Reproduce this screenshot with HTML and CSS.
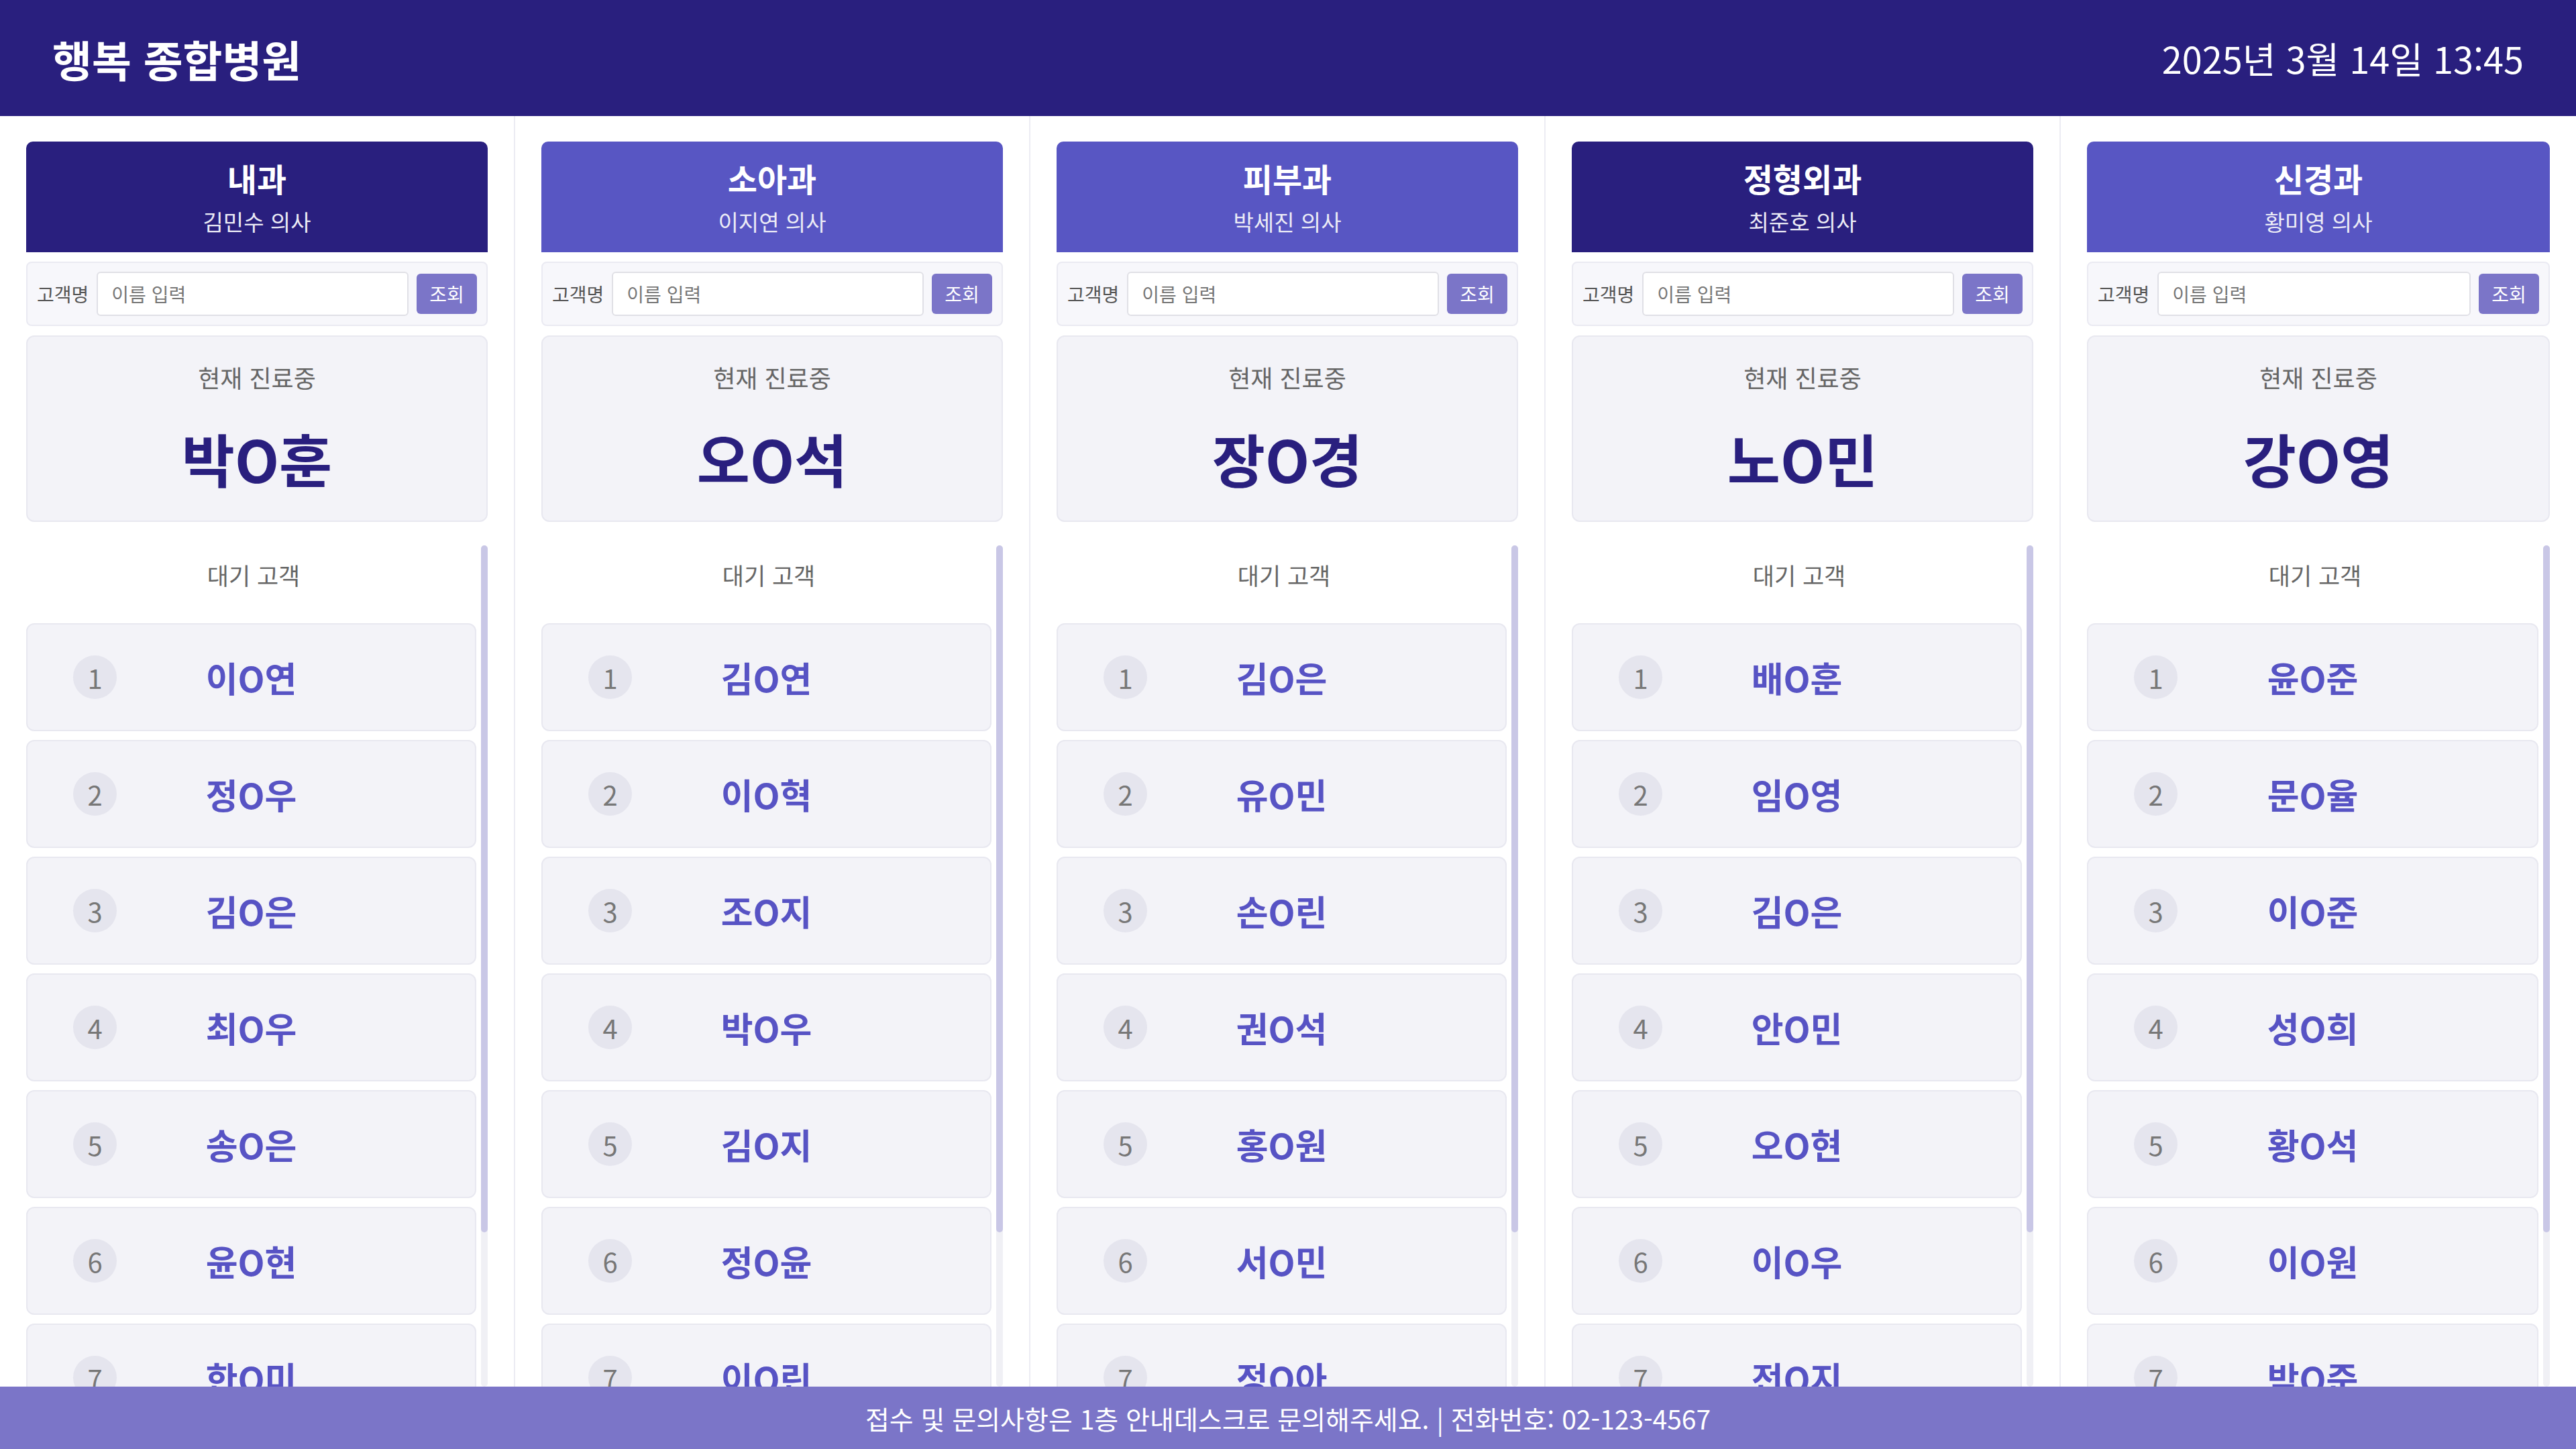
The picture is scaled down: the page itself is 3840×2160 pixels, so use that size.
FILE: index.html
```html
<!DOCTYPE html>
<html lang="ko">
<head>
    <meta charset="UTF-8">
    <meta name="viewport" content="width=device-width, initial-scale=1.0">
    <title>행복 종합병원 진료 현황</title>
    <link rel="stylesheet" href="styles.css">
</head>
<body>
    <header class="topbar">
        <h1 class="hospital">행복 종합병원</h1>
        <div class="clock">2025년 3월 14일 13:45</div>
    </header>

    <main class="board">
        <!-- 내과 -->
        <section class="dept">
            <div class="dept-head dark">
                <h2>내과</h2>
                <p>김민수 의사</p>
            </div>
            <div class="search">
                <label>고객명</label>
                <input type="text" placeholder="이름 입력">
                <button>조회</button>
            </div>
            <div class="now">
                <div class="now-label">현재 진료중</div>
                <div class="now-name">박O훈</div>
            </div>
            <div class="waiting-wrap">
                <div class="waiting">
                    <div class="waiting-title">대기 고객</div>
                    <div class="queue-item"><span class="num">1</span><span class="name">이O연</span></div>
                    <div class="queue-item"><span class="num">2</span><span class="name">정O우</span></div>
                    <div class="queue-item"><span class="num">3</span><span class="name">김O은</span></div>
                    <div class="queue-item"><span class="num">4</span><span class="name">최O우</span></div>
                    <div class="queue-item"><span class="num">5</span><span class="name">송O은</span></div>
                    <div class="queue-item"><span class="num">6</span><span class="name">윤O현</span></div>
                    <div class="queue-item"><span class="num">7</span><span class="name">한O미</span></div>
                    <div class="queue-item"><span class="num">8</span><span class="name">강O수</span></div>
                </div>
                <div class="scroll-track"><div class="scroll-thumb"></div></div>
            </div>
        </section>

        <!-- 소아과 -->
        <section class="dept">
            <div class="dept-head">
                <h2>소아과</h2>
                <p>이지연 의사</p>
            </div>
            <div class="search">
                <label>고객명</label>
                <input type="text" placeholder="이름 입력">
                <button>조회</button>
            </div>
            <div class="now">
                <div class="now-label">현재 진료중</div>
                <div class="now-name">오O석</div>
            </div>
            <div class="waiting-wrap">
                <div class="waiting">
                    <div class="waiting-title">대기 고객</div>
                    <div class="queue-item"><span class="num">1</span><span class="name">김O연</span></div>
                    <div class="queue-item"><span class="num">2</span><span class="name">이O혁</span></div>
                    <div class="queue-item"><span class="num">3</span><span class="name">조O지</span></div>
                    <div class="queue-item"><span class="num">4</span><span class="name">박O우</span></div>
                    <div class="queue-item"><span class="num">5</span><span class="name">김O지</span></div>
                    <div class="queue-item"><span class="num">6</span><span class="name">정O윤</span></div>
                    <div class="queue-item"><span class="num">7</span><span class="name">이O린</span></div>
                    <div class="queue-item"><span class="num">8</span><span class="name">최O민</span></div>
                </div>
                <div class="scroll-track"><div class="scroll-thumb"></div></div>
            </div>
        </section>

        <!-- 피부과 -->
        <section class="dept">
            <div class="dept-head">
                <h2>피부과</h2>
                <p>박세진 의사</p>
            </div>
            <div class="search">
                <label>고객명</label>
                <input type="text" placeholder="이름 입력">
                <button>조회</button>
            </div>
            <div class="now">
                <div class="now-label">현재 진료중</div>
                <div class="now-name">장O경</div>
            </div>
            <div class="waiting-wrap">
                <div class="waiting">
                    <div class="waiting-title">대기 고객</div>
                    <div class="queue-item"><span class="num">1</span><span class="name">김O은</span></div>
                    <div class="queue-item"><span class="num">2</span><span class="name">유O민</span></div>
                    <div class="queue-item"><span class="num">3</span><span class="name">손O린</span></div>
                    <div class="queue-item"><span class="num">4</span><span class="name">권O석</span></div>
                    <div class="queue-item"><span class="num">5</span><span class="name">홍O원</span></div>
                    <div class="queue-item"><span class="num">6</span><span class="name">서O민</span></div>
                    <div class="queue-item"><span class="num">7</span><span class="name">정O아</span></div>
                    <div class="queue-item"><span class="num">8</span><span class="name">한O준</span></div>
                </div>
                <div class="scroll-track"><div class="scroll-thumb"></div></div>
            </div>
        </section>

        <!-- 정형외과 -->
        <section class="dept">
            <div class="dept-head dark">
                <h2>정형외과</h2>
                <p>최준호 의사</p>
            </div>
            <div class="search">
                <label>고객명</label>
                <input type="text" placeholder="이름 입력">
                <button>조회</button>
            </div>
            <div class="now">
                <div class="now-label">현재 진료중</div>
                <div class="now-name">노O민</div>
            </div>
            <div class="waiting-wrap">
                <div class="waiting">
                    <div class="waiting-title">대기 고객</div>
                    <div class="queue-item"><span class="num">1</span><span class="name">배O훈</span></div>
                    <div class="queue-item"><span class="num">2</span><span class="name">임O영</span></div>
                    <div class="queue-item"><span class="num">3</span><span class="name">김O은</span></div>
                    <div class="queue-item"><span class="num">4</span><span class="name">안O민</span></div>
                    <div class="queue-item"><span class="num">5</span><span class="name">오O현</span></div>
                    <div class="queue-item"><span class="num">6</span><span class="name">이O우</span></div>
                    <div class="queue-item"><span class="num">7</span><span class="name">전O지</span></div>
                    <div class="queue-item"><span class="num">8</span><span class="name">송O아</span></div>
                </div>
                <div class="scroll-track"><div class="scroll-thumb"></div></div>
            </div>
        </section>

        <!-- 신경과 -->
        <section class="dept">
            <div class="dept-head">
                <h2>신경과</h2>
                <p>황미영 의사</p>
            </div>
            <div class="search">
                <label>고객명</label>
                <input type="text" placeholder="이름 입력">
                <button>조회</button>
            </div>
            <div class="now">
                <div class="now-label">현재 진료중</div>
                <div class="now-name">강O영</div>
            </div>
            <div class="waiting-wrap">
                <div class="waiting">
                    <div class="waiting-title">대기 고객</div>
                    <div class="queue-item"><span class="num">1</span><span class="name">윤O준</span></div>
                    <div class="queue-item"><span class="num">2</span><span class="name">문O율</span></div>
                    <div class="queue-item"><span class="num">3</span><span class="name">이O준</span></div>
                    <div class="queue-item"><span class="num">4</span><span class="name">성O희</span></div>
                    <div class="queue-item"><span class="num">5</span><span class="name">황O석</span></div>
                    <div class="queue-item"><span class="num">6</span><span class="name">이O원</span></div>
                    <div class="queue-item"><span class="num">7</span><span class="name">박O준</span></div>
                    <div class="queue-item"><span class="num">8</span><span class="name">김O희</span></div>
                </div>
                <div class="scroll-track"><div class="scroll-thumb"></div></div>
            </div>
        </section>
    </main>

    <footer class="notice">
        접수 및 문의사항은 1층 안내데스크로 문의해주세요. | 전화번호: 02-123-4567
    </footer>
</body>
</html>
```

FILE: styles.css
```css
* {
    box-sizing: border-box;
}
html, body {
    margin: 0;
    height: 100%;
}
body {
    font-family: "Noto Sans CJK KR", "Noto Sans", sans-serif;
    background-color: #ffffff;
    color: #333;
    display: flex;
    flex-direction: column;
    overflow: hidden;
}
.topbar {
    height: 173px;
    flex-shrink: 0;
    background-color: #291f7e;
    color: #fff;
    display: flex;
    align-items: center;
    justify-content: space-between;
    padding: 0 78px;
}
.hospital {
    margin: 0;
    font-size: 64px;
    font-weight: 700;
}
.clock {
    font-size: 54px;
}
.board {
    flex: 1;
    min-height: 0;
    display: grid;
    grid-template-columns: repeat(5, 1fr);
}
.dept {
    display: flex;
    flex-direction: column;
    gap: 14px;
    padding: 38px 39px 0;
    border-right: 2px solid #ececf3;
    min-height: 0;
}
.dept:last-child {
    border-right: none;
}
.dept-head {
    height: 165px;
    flex-shrink: 0;
    background-color: #5856c3;
    color: #fff;
    border-radius: 10px 10px 0 0;
    text-align: center;
    padding-top: 25px;
}
.dept-head.dark {
    background-color: #291f7e;
}
.dept-head h2 {
    margin: 0;
    font-size: 48px;
    line-height: 58px;
    font-weight: 700;
}
.dept-head p {
    margin: 14px 0 0;
    font-size: 33px;
    line-height: 44px;
    color: #ececf6;
}
.search {
    height: 96px;
    flex-shrink: 0;
    display: flex;
    align-items: center;
    gap: 12px;
    padding: 0 14px;
    background-color: #f7f7fb;
    border: 2px solid #eaeaf2;
    border-radius: 8px;
}
.search label {
    font-size: 28px;
    color: #555;
}
.search input {
    flex: 1;
    min-width: 0;
    height: 66px;
    padding: 0 20px;
    font-family: inherit;
    font-size: 28px;
    color: #333;
    border: 2px solid #e0e0e6;
    border-radius: 6px;
    background: #fff;
}
.search input::placeholder {
    color: #777;
}
.search button {
    width: 90px;
    height: 60px;
    border: none;
    border-radius: 6px;
    background-color: #7b75c8;
    color: #fff;
    font-family: inherit;
    font-size: 28px;
}
.now {
    height: 278px;
    flex-shrink: 0;
    background-color: #f3f3f8;
    border: 2px solid #e8e8f0;
    border-radius: 12px;
    text-align: center;
    padding-top: 33px;
}
.now-label {
    font-size: 36px;
    line-height: 54px;
    color: #666;
}
.now-name {
    margin-top: 39px;
    font-size: 86px;
    line-height: 110px;
    font-weight: 700;
    color: #291f7e;
}
.waiting-wrap {
    flex: 1;
    min-height: 0;
    margin-top: 21px;
    display: flex;
}
.waiting {
    flex: 1;
    min-width: 0;
    overflow: hidden;
}
.scroll-track {
    width: 10px;
    flex-shrink: 0;
    background-color: #f0f0f5;
    border-radius: 5px;
}
.scroll-thumb {
    height: 1024px;
    background-color: #c9c7e6;
    border-radius: 5px;
}
.waiting-title {
    text-align: center;
    font-size: 35px;
    line-height: 52px;
    color: #666;
    padding: 18px 0 46px;
}
.queue-item {
    height: 161px;
    margin: 0 7px 13px 0;
    display: grid;
    grid-template-columns: 1fr auto 1fr;
    align-items: center;
    padding: 0 68px;
    background-color: #f3f3f8;
    border: 2px solid #e8e8f0;
    border-radius: 12px;
}
.num {
    width: 65px;
    height: 65px;
    border-radius: 50%;
    background-color: #e5e5ee;
    color: #777;
    font-size: 40px;
    display: flex;
    align-items: center;
    justify-content: center;
}
.name {
    font-size: 52px;
    font-weight: 700;
    color: #5753c4;
}
.notice {
    height: 93px;
    flex-shrink: 0;
    background-color: #7b75c8;
    color: #fff;
    font-size: 39px;
    display: flex;
    align-items: center;
    justify-content: center;
}
```
